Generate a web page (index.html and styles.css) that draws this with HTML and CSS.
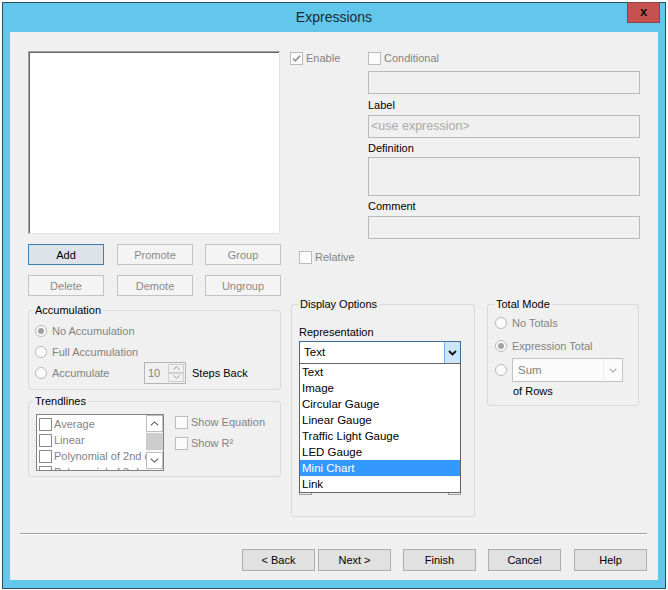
FILE: index.html
```html
<!DOCTYPE html>
<html>
<head>
<meta charset="utf-8">
<title>Expressions</title>
<link rel="stylesheet" href="styles.css">
</head>
<body>
<div class="win">
  <div class="titlebar">Expressions</div>
  <div class="close">x</div>
  <div class="client">
    <div class="top">
      <div class="lcol">
        <div class="listbox"></div>
        <div class="btnrow">
          <div class="btn def">Add</div>
          <div class="btn dis">Promote</div>
          <div class="btn dis">Group</div>
        </div>
        <div class="btnrow">
          <div class="btn dis">Delete</div>
          <div class="btn dis">Demote</div>
          <div class="btn dis">Ungroup</div>
        </div>
      </div>
      <div class="rcol">
        <div class="cbrow">
          <div class="cb dis enable"><span class="box"><svg width="11" height="11" viewBox="0 0 11 11"><path d="M2 5.5 L4.3 7.8 L9 2.8" fill="none" stroke="#8f8f8f" stroke-width="1.6"/></svg></span>Enable</div>
          <div class="cb dis"><span class="box"></span>Conditional</div>
        </div>
        <div class="fields">
          <div class="field"></div>
          <div class="flabel l1">Label</div>
          <div class="field ph">&lt;use expression&gt;</div>
          <div class="flabel l2">Definition</div>
          <div class="field tall"></div>
          <div class="flabel l3">Comment</div>
          <div class="field"></div>
        </div>
        <div class="cb dis relative"><span class="box"></span>Relative</div>
      </div>
    </div>

    <div class="mid">
      <div class="mleft">
        <fieldset class="grp acc">
          <legend>Accumulation</legend>
          <div class="accbody">
            <div class="rrow dis"><span class="radio"><span class="dot"></span></span>No Accumulation</div>
            <div class="rrow dis"><span class="radio"></span>Full Accumulation</div>
            <div class="rrow"><span class="radio"></span><span class="acclbl dis">Accumulate</span>
              <div class="spin"><span class="val">10</span><span class="arrows"><span class="arr"><svg width="7" height="4" viewBox="0 0 7 4"><path d="M0.5 3.5 L3.5 0.8 L6.5 3.5" fill="none" stroke="#9a9a9a" stroke-width="1"/></svg></span><span class="arr"><svg width="7" height="4" viewBox="0 0 7 4"><path d="M0.5 0.5 L3.5 3.2 L6.5 0.5" fill="none" stroke="#9a9a9a" stroke-width="1"/></svg></span></span></div>
              <span class="steps">Steps Back</span>
            </div>
          </div>
        </fieldset>
        <fieldset class="grp trend">
          <legend>Trendlines</legend>
          <div class="trendbody">
            <div class="tlist">
              <div class="titems">
                <div class="titem"><span class="box"></span>Average</div>
                <div class="titem"><span class="box"></span>Linear</div>
                <div class="titem"><span class="box"></span>Polynomial of 2nd degree</div>
                <div class="titem"><span class="box"></span>Polynomial of 3rd degree</div>
              </div>
              <div class="sbar">
                <span class="sarr"><svg width="9" height="5" viewBox="0 0 9 5"><path d="M0.8 4.4 L4.5 0.9 L8.2 4.4" fill="none" stroke="#5a5a5a" stroke-width="1.1"/></svg></span>
                <span class="thumb"></span>
                <span class="sarr down"><svg width="9" height="5" viewBox="0 0 9 5"><path d="M0.8 0.6 L4.5 4.1 L8.2 0.6" fill="none" stroke="#5a5a5a" stroke-width="1.1"/></svg></span>
              </div>
            </div>
            <div class="tchecks">
              <div class="cb dis tc1"><span class="box"></span>Show Equation</div>
              <div class="cb dis tc2"><span class="box"></span>Show R²</div>
            </div>
          </div>
        </fieldset>
      </div>

      <fieldset class="grp disp">
        <legend>Display Options</legend>
        <div class="dispbody">
          <div class="replbl">Representation</div>
          <div class="combowrap">
            <div class="combo"><span class="ctext">Text</span><span class="cbtn"><svg width="9" height="6" viewBox="0 0 9 6"><path d="M1 1 L4.5 4.5 L8 1" fill="none" stroke="#111" stroke-width="1.8"/></svg></span></div>
            <div class="hidden-row"><span class="hbox"></span><span class="hline"></span><span class="hbox"></span></div>
            <ul class="droplist">
              <li>Text</li>
              <li>Image</li>
              <li>Circular Gauge</li>
              <li>Linear Gauge</li>
              <li>Traffic Light Gauge</li>
              <li>LED Gauge</li>
              <li class="sel">Mini Chart</li>
              <li>Link</li>
            </ul>
          </div>
        </div>
      </fieldset>

      <fieldset class="grp total">
        <legend>Total Mode</legend>
        <div class="totalbody">
          <div class="trow t1 dis"><span class="radio"></span>No Totals</div>
          <div class="trow t2 dis"><span class="radio"><span class="dot"></span></span>Expression Total</div>
          <div class="trow t3"><span class="radio"></span>
            <div class="scombo"><span class="stext">Sum</span><span class="sbtn"><svg width="8" height="5" viewBox="0 0 8 5"><path d="M0.8 0.8 L4 4 L7.2 0.8" fill="none" stroke="#a8a8a8" stroke-width="1.2"/></svg></span></div>
          </div>
          <div class="ofrows">of Rows</div>
        </div>
      </fieldset>
    </div>

    <div class="sep"></div>
    <div class="footer">
      <div class="fbtn">&lt; Back</div>
      <div class="fbtn next">Next &gt;</div>
      <div class="fbtn finish">Finish</div>
      <div class="fbtn cancel">Cancel</div>
      <div class="fbtn help">Help</div>
    </div>
  </div>
</div>
</body>
</html>
```

FILE: styles.css
```css
* { box-sizing: border-box; }
html, body { margin: 0; padding: 0; }
body {
  width: 668px;
  height: 590px;
  overflow: hidden;
  background: #ffffff;
  font-family: "Liberation Sans", Arial, sans-serif;
  font-size: 11px;
  color: #000;
}
.win {
  position: relative;
  margin: 2px 0 0 2px;
  width: 664px;
  height: 587px;
  border: 1px solid #2b4e63;
  background: #62c7ea;
}
.titlebar {
  height: 29px;
  line-height: 29px;
  text-align: center;
  font-size: 14px;
  color: #1b2a33;
}
.close {
  position: absolute;
  left: 624px;
  top: -1px;
  width: 33px;
  height: 21px;
  background: #c75050;
  border: 1px solid #8f4444;
  color: #111;
  font-weight: bold;
  font-size: 13px;
  line-height: 17px;
  text-align: center;
}
.client {
  margin-left: 7px;
  width: 648px;
  height: 548px;
  background: #f0f0f0;
  display: flex;
  flex-direction: column;
}
.dis { color: #838383; }

/* top area */
.top { display: flex; padding: 19px 0 0 18px; }
.lcol { width: 253px; flex: none; }
.listbox {
  width: 252px;
  height: 183px;
  background: #fff;
  border: 1px solid;
  border-color: #a0a0a0 #e3e3e3 #e3e3e3 #a0a0a0;
  box-shadow: inset 1px 1px 0 #696969;
}
.btnrow { display: flex; margin-top: 10px; }
.btn {
  width: 76px;
  height: 21px;
  display: flex;
  align-items: center;
  justify-content: center;
  border: 1px solid #adadad;
  background: #e1e1e1;
}
.btnrow .btn:nth-child(2) { margin-left: 13px; }
.btnrow .btn:nth-child(3) { margin-left: 12px; }
.btn.dis { background: #f4f4f4; border-color: #c3c3c3; color: #8a8a8a; }
.btn.def { background: #dde3e9; border-color: #3c7fb1; }

.rcol { margin-left: 9px; width: 352px; }
.cbrow { display: flex; height: 14px; align-items: center; margin-top: 0; }
.cb { display: flex; align-items: center; height: 14px; white-space: nowrap; }
.box {
  width: 13px;
  height: 13px;
  border: 1px solid #bcbcbc;
  background: #fbfbfb;
  margin-right: 3px;
  flex: none;
  display: flex;
  align-items: center;
  justify-content: center;
}
.enable { width: 78px; }
.fields { margin: 6px 0 0 78px; width: 272px; }
.field { height: 23px; border: 1px solid #b9b9b9; background: #f0f0f0; }
.field.tall { height: 39px; }
.ph { color: #a9a9a9; padding-left: 2px; line-height: 21px; font-size: 12.5px; }
.flabel { height: 14px; line-height: 14px; }
.l1 { margin: 4px 0 3px; }
.l2 { margin: 3px 0 2px; }
.l3 { margin: 3px 0 3px; }
.relative { margin: 11px 0 0 9px; }

/* middle */
.mid { display: flex; align-items: flex-start; padding-left: 18px; margin-top: 1px; }
.mleft { width: 253px; flex: none; margin-top: 6px; }
.grp {
  margin: 0;
  padding: 0;
  border: 1px solid #d9d9d9;
  border-radius: 3px;
  min-width: 0;
}
.grp legend {
  padding: 0 2px;
  margin-left: 6px;
  line-height: 14px;
  font-size: 11px;
}
.grp.acc { height: 87px; }
.grp.acc legend, .grp.trend legend { margin-left: 4px; }
.accbody { padding: 3px 0 0 6px; }
.rrow, .trow { display: flex; align-items: center; height: 21px; white-space: nowrap; }
.radio {
  width: 12px;
  height: 12px;
  border-radius: 50%;
  border: 1px solid #b9b9b9;
  background: #fbfbfb;
  margin-right: 5px;
  flex: none;
  display: flex;
  align-items: center;
  justify-content: center;
}
.dot { width: 6px; height: 6px; border-radius: 50%; background: #a0a0a0; }
.acclbl { width: 92px; }
.spin {
  width: 42px;
  height: 22px;
  border: 1px solid #b5b5b5;
  background: #f0f0f0;
  display: flex;
}
.spin .val { flex: 1; padding-left: 3px; line-height: 20px; color: #838383; }
.spin .arrows { width: 17px; display: flex; flex-direction: column; padding: 1px 1px 1px 0; }
.spin .arr { flex: 1; border: 1px solid #cfcfcf; display: flex; align-items: center; justify-content: center; }
.steps { margin-left: 6px; }

.grp.trend { height: 83px; margin-top: 4px; }
.trendbody { display: flex; padding: 6px 0 0 7px; }
.tlist {
  width: 128px;
  height: 57px;
  border: 1px solid #828282;
  background: #fff;
  display: flex;
}
.titems { width: 109px; overflow: hidden; padding-top: 1px; }
.titem { height: 16px; display: flex; align-items: center; white-space: nowrap; color: #838383; padding-left: 2px; }
.titem .box { margin-right: 2px; border-color: #8a8a8a; background: #fff; }
.sbar { width: 17px; display: flex; flex-direction: column; background: #f7f7f7; }
.sarr { height: 17px; border: 1px solid #bdbdbd; background: #fff; display: flex; align-items: center; justify-content: center; }
.thumb { height: 17px; margin-top: 1px; background: #cdcdcd; }
.sarr.down { margin-top: 2px; }
.tchecks { margin-left: 11px; }
.tc1 { height: 16px; }
.tc2 { height: 16px; margin-top: 5px; }

.grp.disp { width: 184px; height: 220px; margin-left: 10px; flex: none; }
.dispbody { padding: 14px 0 0 7px; }
.replbl { height: 14px; line-height: 14px; }
.combowrap { position: relative; margin-top: 2px; width: 162px; }
.combo {
  height: 23px;
  border: 1px solid #3f6d98;
  background: #fff;
  display: flex;
}
.ctext { flex: 1; padding-left: 4px; line-height: 21px; font-size: 11.5px; }
.cbtn { width: 16px; background: #cde6f7; border-left: 1px solid #7eb4ea; display: flex; align-items: center; justify-content: center; }
.hidden-row { display: flex; align-items: flex-end; margin-top: 118px; height: 13px; }
.hbox { width: 13px; height: 13px; border: 1px solid #a0a0a0; flex: none; }
.hline { flex: 1; }
.droplist {
  position: absolute;
  left: 0;
  top: 22px;
  width: 162px;
  height: 130px;
  margin: 0;
  padding: 0;
  list-style: none;
  background: #fff;
  border: 1px solid #646464;
}
.droplist li { height: 16px; line-height: 16px; padding-left: 2px; font-size: 11.5px; }
.droplist li.sel { background: #3399ff; color: #fff; }

.grp.total { width: 152px; height: 109px; margin-left: 12px; flex: none; }
.totalbody { padding: 4px 0 0 7px; }
.trow { height: 16px; }
.t2 { margin-top: 7px; }
.t3 { margin-top: 4px; height: 24px; }
.scombo {
  width: 111px;
  height: 24px;
  border: 1px solid #c3c3c3;
  background: #fbfbfb;
  display: flex;
}
.stext { flex: 1; padding-left: 5px; line-height: 22px; color: #838383; font-size: 11.5px; }
.sbtn { width: 19px; display: flex; align-items: center; justify-content: center; border-left: 1px solid #ececec; }
.ofrows { margin: 2px 0 0 18px; height: 14px; line-height: 14px; }

/* footer */
.sep {
  margin: 16px 0 0 10px;
  width: 627px;
  height: 2px;
  border-top: 1px solid #a0a0a0;
  border-bottom: 1px solid #ffffff;
}
.footer { display: flex; margin-top: 14px; padding-left: 232px; }
.fbtn {
  width: 73px;
  height: 22px;
  border: 1px solid #adadad;
  background: #e1e1e1;
  display: flex;
  align-items: center;
  justify-content: center;
}
.next { margin-left: 3px; }
.finish { margin-left: 12px; }
.cancel { margin-left: 12px; }
.help { margin-left: 13px; }
```
